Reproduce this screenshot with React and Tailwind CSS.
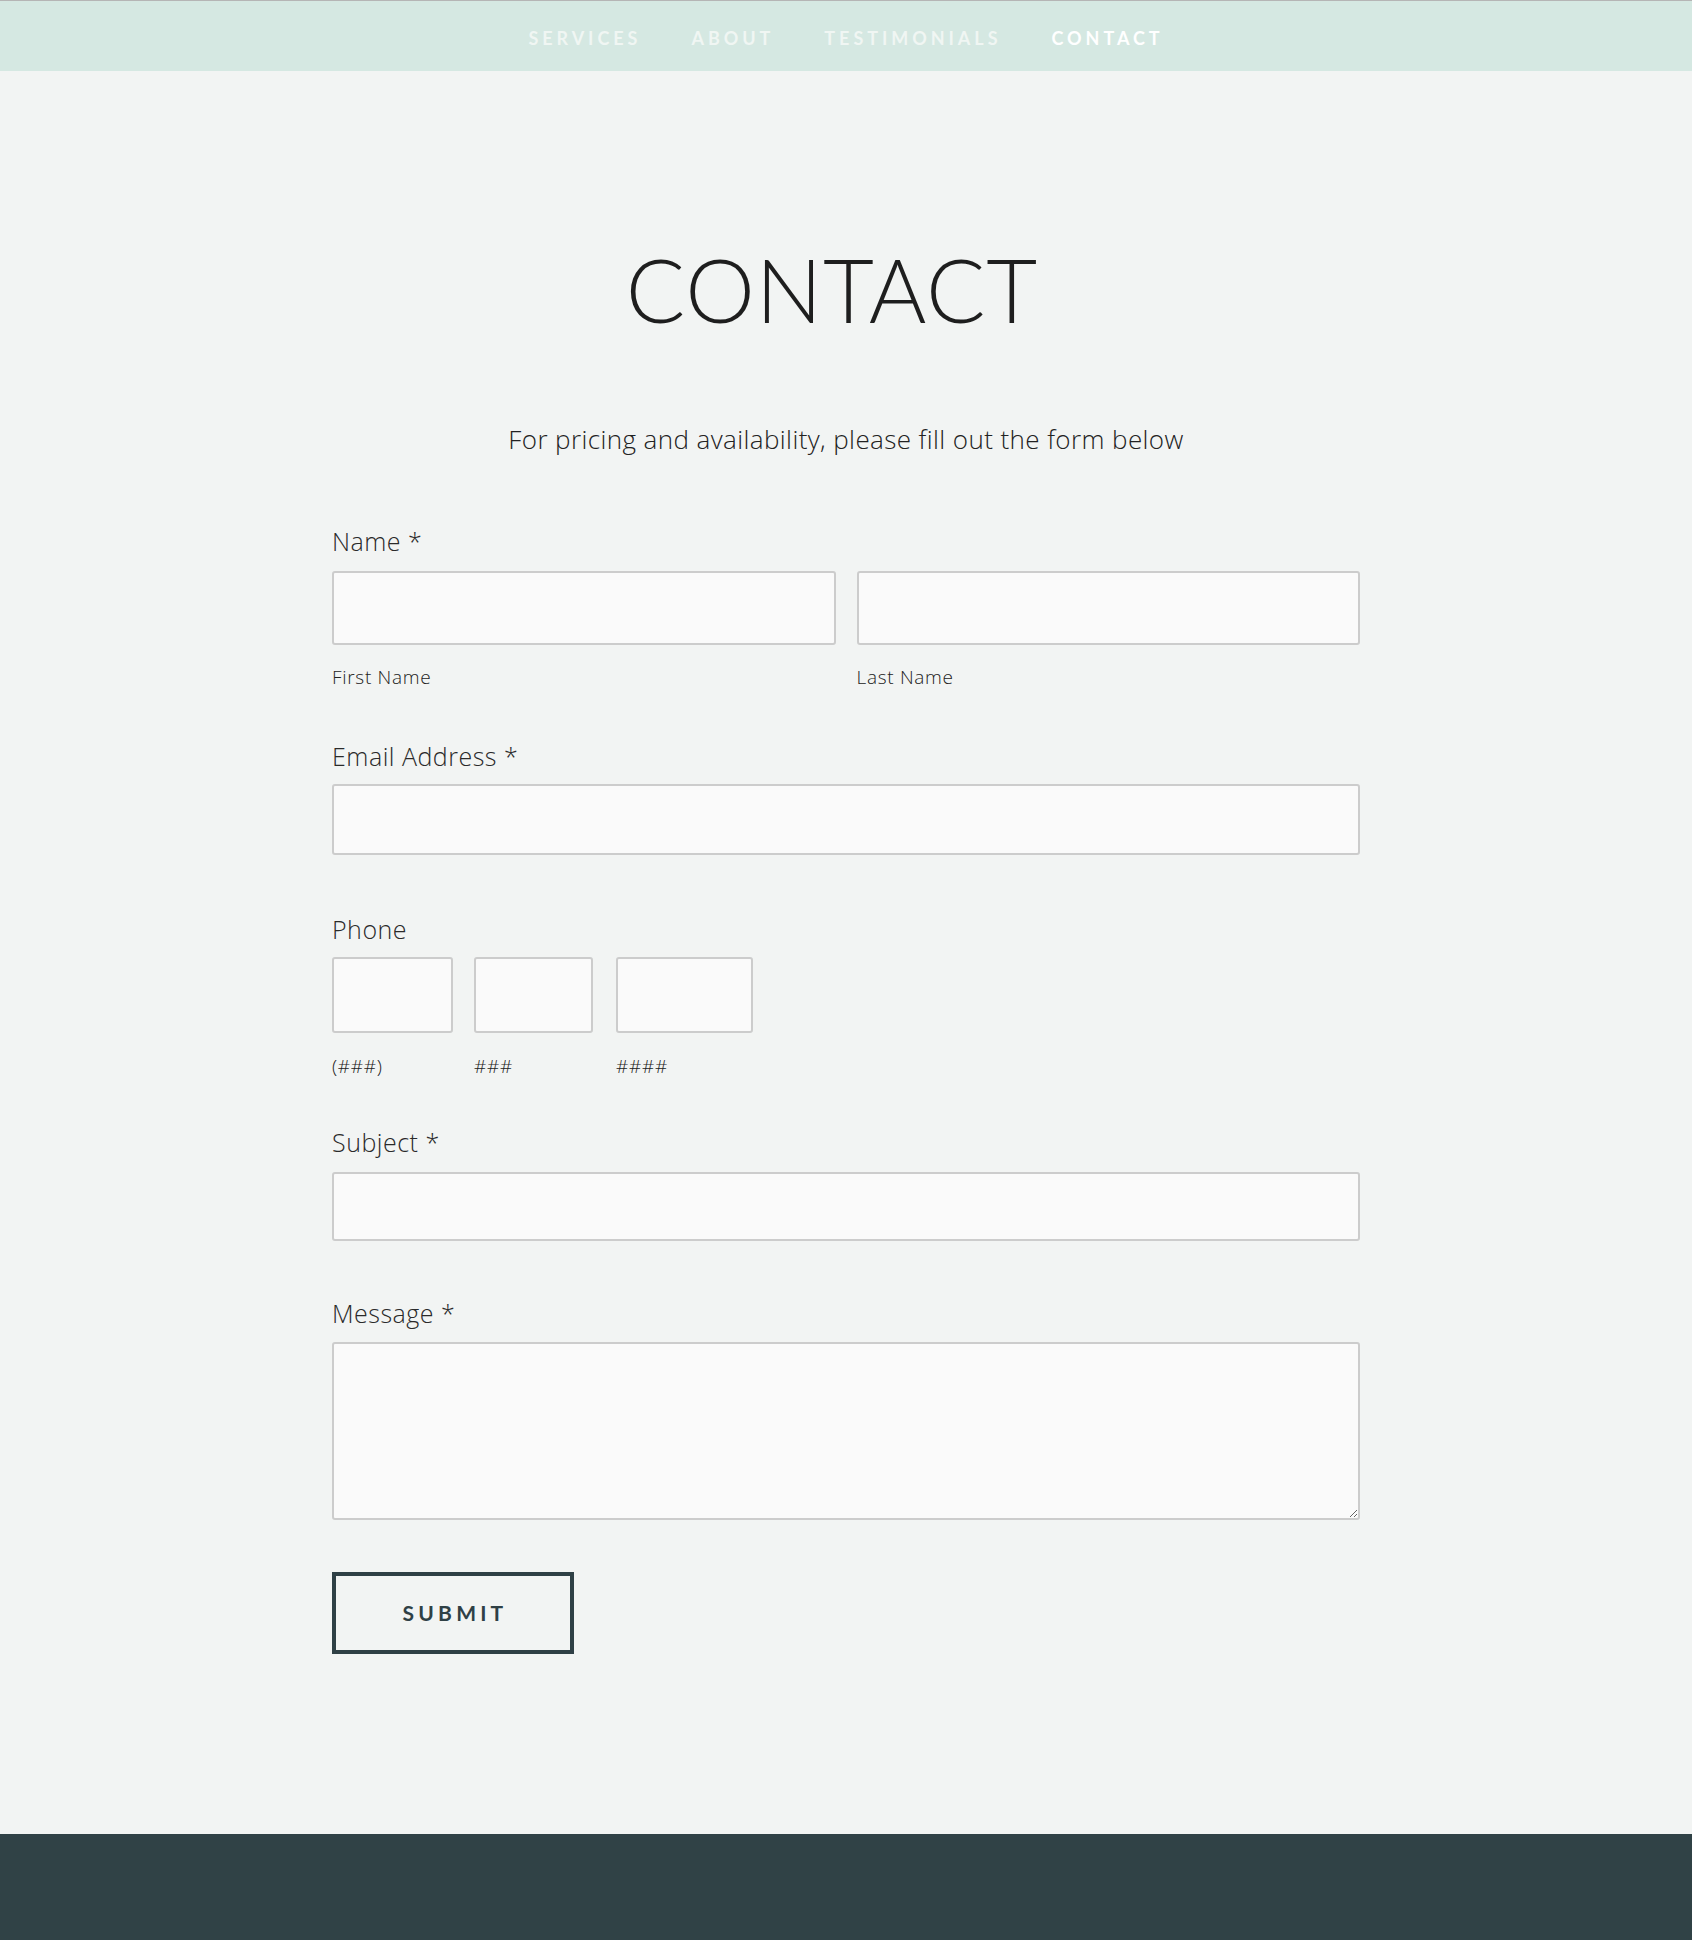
import React from "react";

const NAV = [
    { label: "SERVICES", active: false },
    { label: "ABOUT", active: false },
    { label: "TESTIMONIALS", active: false },
    { label: "CONTACT", active: true }
];

const inputCls = "block border-2 border-[#cccccc] rounded-[3px] bg-[#fafafa] outline-none";

const BODY_FONT = { fontFamily: "'Open Sans', Lato, sans-serif" };

const Label = ({ children, className = "" }) => (
    <label
        className={`block text-[25px] leading-[30px] font-light text-[#2a2a2a] tracking-[0.5px] ${className}`}
        style={BODY_FONT}
    >
        {children}
    </label>
);

const SubLabel = ({ children, className = "" }) => (
    <p
        className={`text-[19px] leading-[24px] font-light text-[#222222] tracking-[0.7px] ${className}`}
        style={BODY_FONT}
    >
        {children}
    </p>
);

export default function App() {
    return (
        <div
            className="min-h-[1940px] flex flex-col bg-[#f2f4f3]"
            style={{ fontFamily: "Lato, 'Open Sans', sans-serif" }}
        >
            {/* NAV */}
            <nav className="h-[71px] border-t border-[#b5b5b5] bg-[#d5e8e2] flex items-center justify-center pt-[4px]">
                {NAV.map((item, i) => (
                    <a
                        key={item.label}
                        href="#"
                        className={`text-[18px] font-bold tracking-[0.22em] ${i > 0 ? "ml-[50px]" : ""} ${item.active ? "text-white" : "text-[#f0f6f3]"}`}
                    >
                        {item.label}
                    </a>
                ))}
            </nav>

            {/* MAIN */}
            <main className="flex-1 pt-[168px]">
                <h1 className="text-center text-[88px] leading-[100px] font-light text-[#1e1e1e] tracking-[0.01em] pr-[28px]">
                    CONTACT
                </h1>

                <p
                    className="mt-[85px] text-center text-[26px] leading-[30px] font-light text-[#222222] tracking-[0.4px]"
                    style={BODY_FONT}
                >
                    For pricing and availability, please fill out the form below
                </p>

                <form className="w-[1028px] mx-auto" onSubmit={e => e.preventDefault()}>
                    {/* NAME */}
                    <Label className="mt-[72px]">Name *</Label>
                    <div className="mt-[15px] grid grid-cols-2 gap-[21px]">
                        <div>
                            <input className={`${inputCls} w-full h-[74px]`} />
                            <SubLabel className="mt-[20px]">First Name</SubLabel>
                        </div>
                        <div>
                            <input className={`${inputCls} w-full h-[74px]`} />
                            <SubLabel className="mt-[20px]">Last Name</SubLabel>
                        </div>
                    </div>

                    {/* EMAIL */}
                    <Label className="mt-[52px]">Email Address *</Label>
                    <input className={`${inputCls} mt-[13px] w-full h-[71px]`} />

                    {/* PHONE */}
                    <Label className="mt-[59px]">Phone</Label>
                    <div className="mt-[13px] flex">
                        <div className="w-[121px]">
                            <input className={`${inputCls} w-full h-[76px]`} />
                            <SubLabel className="mt-[21px]">(###)</SubLabel>
                        </div>
                        <div className="w-[119px] ml-[21px]">
                            <input className={`${inputCls} w-full h-[76px]`} />
                            <SubLabel className="mt-[21px]">###</SubLabel>
                        </div>
                        <div className="w-[137px] ml-[23px]">
                            <input className={`${inputCls} w-full h-[76px]`} />
                            <SubLabel className="mt-[21px]">####</SubLabel>
                        </div>
                    </div>

                    {/* SUBJECT */}
                    <Label className="mt-[49px]">Subject *</Label>
                    <input className={`${inputCls} mt-[15px] w-full h-[69px]`} />

                    {/* MESSAGE */}
                    <Label className="mt-[57px]">Message *</Label>
                    <textarea className={`${inputCls} mt-[14px] w-full h-[178px]`} />

                    {/* SUBMIT */}
                    <button
                        type="submit"
                        className="mt-[52px] w-[242px] h-[82px] border-4 border-[#2f4045] text-[#2f4045] text-[21px] font-bold tracking-[0.2em] pl-[4px]"
                    >
                        SUBMIT
                    </button>
                </form>
            </main>

            {/* FOOTER */}
            <footer className="h-[106px] bg-[#304246]" />
        </div>
    );
}
